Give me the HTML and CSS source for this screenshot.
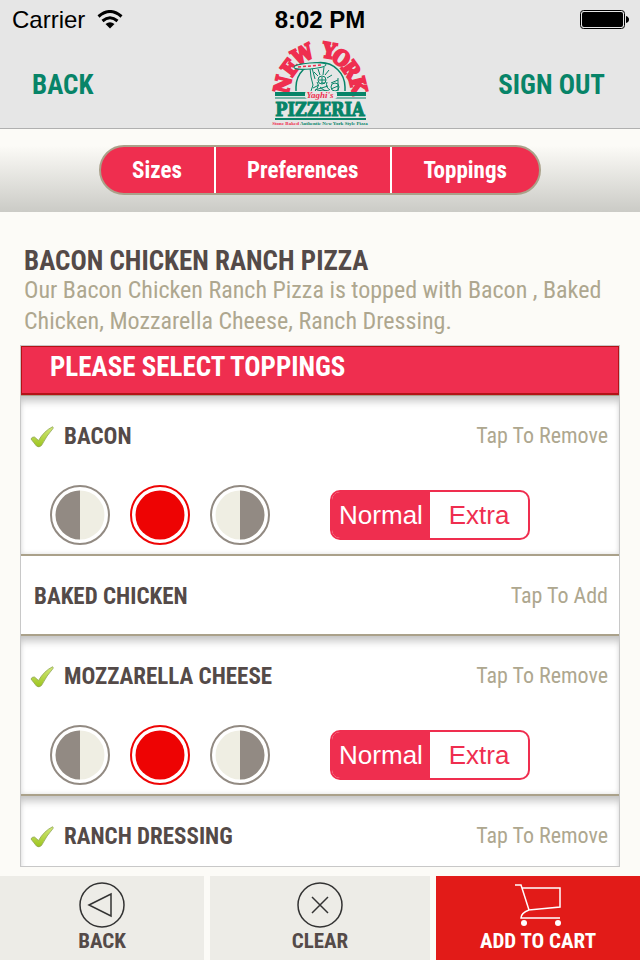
FILE: index.html
```html
<!DOCTYPE html>
<html lang="en">
<head>
    <meta charset="UTF-8">
    <meta name="viewport" content="width=device-width, initial-scale=1.0">
    <title>New York Pizzeria - Toppings</title>
    <link rel="stylesheet" href="styles.css">
</head>
<body>
    <!-- shared icons -->
    <svg class="sprite" aria-hidden="true">
        <defs>
            <linearGradient id="green" x1="0" y1="0" x2="0" y2="1">
                <stop offset="0" stop-color="#d3ea7a"/>
                <stop offset="1" stop-color="#9cc41c"/>
            </linearGradient>
        </defs>
        <symbol id="check" viewBox="0 0 24 22">
            <path d="M1 13 Q2 10.500 4.500 11 L8.500 14.500 Q14 5 22.500 0.800 Q23.500 0.800 23 2.500 Q17 9 11.500 19.500 Q9 22 6.500 20 Q4 17 1 13 Z" fill="url(#green)" stroke="#91a557" stroke-width="0.800"/>
        </symbol>
        <symbol id="left-half" viewBox="0 0 60 60">
            <circle cx="30" cy="30" r="29" fill="#fff" stroke="#928a82" stroke-width="2"/>
            <circle cx="30" cy="30" r="24.500" fill="#efeee3"/>
            <path d="M30 5.500 A24.500 24.500 0 0 0 30 54.500 Z" fill="#928a83"/>
        </symbol>
        <symbol id="whole" viewBox="0 0 60 60">
            <circle cx="30" cy="30" r="29" fill="#fff" stroke="#ee0505" stroke-width="2"/>
            <circle cx="30" cy="30" r="24.500" fill="#ee0303"/>
        </symbol>
        <symbol id="right-half" viewBox="0 0 60 60">
            <circle cx="30" cy="30" r="29" fill="#fff" stroke="#928a82" stroke-width="2"/>
            <circle cx="30" cy="30" r="24.500" fill="#efeee3"/>
            <path d="M30 5.500 A24.500 24.500 0 0 1 30 54.500 Z" fill="#928a83"/>
        </symbol>
    </svg>

    <header class="top">
        <div class="status-bar">
            <div class="carrier">
                <span>Carrier</span>
                <svg width="26" height="20" viewBox="0 0 26 20">
                    <path d="M1.500 6.500 Q13 -3.500 24.500 6.500" fill="none" stroke="#000" stroke-width="3"/>
                    <path d="M5.500 11 Q13 4.500 20.500 11" fill="none" stroke="#000" stroke-width="3"/>
                    <path d="M8.500 14 Q13 10.500 17.500 14 L13 18.500 Z"/>
                </svg>
            </div>
            <div class="time">8:02 PM</div>
            <div class="battery">
                <svg width="48" height="20" viewBox="0 0 48 20">
                    <rect x="0.500" y="0.500" width="44" height="18" rx="3" fill="none" stroke="#000"/>
                    <rect x="2" y="2" width="41" height="15" rx="2"/>
                    <path d="M46 6 Q49 7 49 9.500 Q49 12 46 13 Z"/>
                </svg>
            </div>
        </div>
        <nav class="nav-bar">
            <a href="#" class="nav-link">BACK</a>
            <svg class="logo" width="104" height="88" viewBox="-6 0 104 88" role="img" aria-label="New York Pizzeria">
                <path d="M23 51 V47 A24.500 24.500 0 0 1 72 47 V51" fill="none" stroke="#078468" stroke-width="1.500"/>
                <g fill="none" stroke="#078468">
                    <path d="M38 51 L40 45 L38 37 L37 28 L39 28 L42 39 M42 51 Q47 46 44 42 M44 51 Q50 49 56 51 M54 42 Q52 47 57 50 M58 43 L65 40 M58 49 L65 46 M65 38 V51"/>
                    <circle cx="49" cy="40" r="4"/>
                    <path d="M45 36 L41 32 M47 35 L45 29 M50 35 L51 27 M52 35 L56 30 M54 38 L59 35 M46 40 H53 M48 43 H52 M49 37 V43"/>
                    <circle cx="62" cy="47" r="4"/>
                    <path d="M40 48 L46 45 M42 50 L55 46 M47 47 L52 51"/>
                </g>
                <g class="logo-arc">
                    <text transform="translate(17 46) rotate(-77)">N</text>
                    <text transform="translate(23 32) rotate(-53)">E</text>
                    <text transform="translate(33 21) rotate(-27)">W</text>
                    <text transform="translate(55 18) rotate(10)">Y</text>
                    <text transform="translate(64 24) rotate(34)">O</text>
                    <text transform="translate(72 34) rotate(54)">R</text>
                    <text transform="translate(78 47) rotate(76)">K</text>
                </g>
                <ellipse cx="37" cy="26" rx="16" ry="3" fill="#e6e6e6" stroke="#078468" transform="rotate(-5 37 26)"/>
                <path d="M25 27 L49 25" stroke="#ef2e4f" stroke-width="1.500" stroke-dasharray="3 2"/>
                <path d="M2 54 H93" stroke="#078468" stroke-width="4"/>
                <path d="M2 58 H93" stroke="#078468"/>
                <rect x="32" y="51" width="32" height="8" rx="3" fill="#e6e6e6"/>
                <text class="logo-name" x="47" y="58">Yaghi's</text>
                <text class="logo-word" x="47" y="76">PIZZERIA</text>
                <path d="M2 79 H93" stroke="#078468" stroke-width="2"/>
                <text class="logo-tag" x="47" y="85"><tspan class="red">Stone Baked</tspan> Authentic New York Style Pizza</text>
            </svg>
            <a href="#" class="nav-link sign-out">SIGN OUT</a>
        </nav>
    </header>

    <div class="tabs-strip">
        <div class="tabs">
            <button>Sizes</button>
            <button>Preferences</button>
            <button>Toppings</button>
        </div>
    </div>

    <main>
        <div class="intro">
            <h1>BACON CHICKEN RANCH PIZZA</h1>
            <p>Our Bacon Chicken Ranch Pizza is topped with Bacon , Baked Chicken, Mozzarella Cheese, Ranch Dressing.</p>
        </div>

        <section class="panel">
            <h2>PLEASE SELECT TOPPINGS</h2>
            <ul class="toppings">
                <li class="topping selected">
                    <div class="topping-head">
                        <svg class="check"><use href="#check"/></svg>
                        <h3>BACON</h3>
                        <button class="tap">Tap To Remove</button>
                    </div>
                    <div class="options">
                        <div class="portions">
                            <label><input type="radio" name="bacon-side" aria-label="Left half"><svg><use href="#left-half"/></svg></label>
                            <label><input type="radio" name="bacon-side" aria-label="Whole" checked><svg><use href="#whole"/></svg></label>
                            <label><input type="radio" name="bacon-side" aria-label="Right half"><svg><use href="#right-half"/></svg></label>
                        </div>
                        <div class="amount">
                            <label><input type="radio" name="bacon-amount" checked><span>Normal</span></label>
                            <label><input type="radio" name="bacon-amount"><span>Extra</span></label>
                        </div>
                    </div>
                </li>
                <li class="topping">
                    <div class="topping-head">
                        <h3>BAKED CHICKEN</h3>
                        <button class="tap">Tap To Add</button>
                    </div>
                </li>
                <li class="topping selected">
                    <div class="topping-head">
                        <svg class="check"><use href="#check"/></svg>
                        <h3>MOZZARELLA CHEESE</h3>
                        <button class="tap">Tap To Remove</button>
                    </div>
                    <div class="options">
                        <div class="portions">
                            <label><input type="radio" name="mozz-side" aria-label="Left half"><svg><use href="#left-half"/></svg></label>
                            <label><input type="radio" name="mozz-side" aria-label="Whole" checked><svg><use href="#whole"/></svg></label>
                            <label><input type="radio" name="mozz-side" aria-label="Right half"><svg><use href="#right-half"/></svg></label>
                        </div>
                        <div class="amount">
                            <label><input type="radio" name="mozz-amount" checked><span>Normal</span></label>
                            <label><input type="radio" name="mozz-amount"><span>Extra</span></label>
                        </div>
                    </div>
                </li>
                <li class="topping selected">
                    <div class="topping-head">
                        <svg class="check"><use href="#check"/></svg>
                        <h3>RANCH DRESSING</h3>
                        <button class="tap">Tap To Remove</button>
                    </div>
                </li>
            </ul>
        </section>
    </main>

    <footer class="actions">
        <button>
            <svg width="46" height="46" viewBox="0 0 46 46" fill="none" stroke="#333" stroke-width="1.500">
                <circle cx="23" cy="23" r="22"/>
                <path d="M10 23 L32 12 V34 Z"/>
            </svg>
            BACK
        </button>
        <button>
            <svg width="46" height="46" viewBox="0 0 46 46" fill="none" stroke="#333" stroke-width="1.500">
                <circle cx="23" cy="23" r="22"/>
                <path d="M15 15 L31 31 M31 15 L15 31"/>
            </svg>
            CLEAR
        </button>
        <button class="add">
            <svg width="46" height="46" viewBox="0 0 46 46" fill="none" stroke="#fff" stroke-width="1.500">
                <path d="M0 3 H6 L14 28 L45 25 V6 H7 M14 28 Q6 31 6 36 H45"/>
                <circle cx="9" cy="41" r="3" fill="#fff" stroke="none"/>
                <circle cx="43" cy="41" r="3" fill="#fff" stroke="none"/>
            </svg>
            ADD TO CART
        </button>
    </footer>
</body>
</html>
```
FILE: styles.css
```css
* {
    box-sizing: border-box;
}
body {
    margin: 0;
    height: 100vh;
    display: flex;
    flex-direction: column;
    font-family: 'Roboto Condensed', 'Roboto', sans-serif;
    background-color: #fcfbf7;
    color: #544a48;
}
h1, h2, h3, p, ul {
    margin: 0;
    padding: 0;
}
button {
    font-family: inherit;
    border: none;
    background: none;
    padding: 0;
    cursor: pointer;
}
.sprite {
    position: absolute;
    width: 0;
    height: 0;
}

/* header */
.top {
    background-color: #e6e6e6;
    border-bottom: 1px solid #b0b0b0;
}
.status-bar {
    display: grid;
    grid-template-columns: 1fr auto 1fr;
    align-items: center;
    height: 40px;
    padding: 0 12px;
    font-family: 'Liberation Sans', sans-serif;
    font-size: 24px;
    color: #000;
}
.carrier {
    display: flex;
    align-items: center;
    gap: 12px;
}
.time {
    font-weight: bold;
}
.battery {
    display: flex;
    justify-content: flex-end;
}
.battery svg {
    overflow: visible;
}
.nav-bar {
    display: grid;
    grid-template-columns: 1fr auto 1fr;
    height: 88px;
    padding: 0 35px 0 32px;
}
.nav-link {
    align-self: center;
    padding-top: 2px;
    font-size: 27px;
    font-weight: bold;
    color: #078468;
    text-decoration: none;
}
.sign-out {
    text-align: right;
}
.logo {
    overflow: visible;
}
.logo text {
    font-family: 'DejaVu Serif Condensed', 'Liberation Serif', serif;
    font-weight: bold;
    text-anchor: middle;
}
.logo .logo-arc text {
    font-size: 21px;
    fill: #ef2e4f;
    stroke: #ef2e4f;
    stroke-width: 2px;
}
.logo .logo-name {
    font-family: 'Liberation Serif', serif;
    font-size: 9px;
    font-style: italic;
    fill: #ef2e4f;
}
.logo .logo-word {
    font-size: 18px;
    fill: #078468;
    stroke: #078468;
    stroke-width: 1px;
}
.logo .logo-tag {
    font-family: 'Liberation Serif', serif;
    font-size: 5px;
    fill: #078468;
}
.logo .red {
    fill: #ef2e4f;
}

/* tabs */
.tabs-strip {
    display: flex;
    justify-content: center;
    padding: 16px 0 17px;
    background: linear-gradient(#fcfbf7 20%, #cbcbc6);
}
.tabs {
    display: flex;
    height: 50px;
    border: 2px solid #aaa18a;
    border-radius: 25px;
    background-color: #ef2e4f;
    overflow: hidden;
}
.tabs button {
    padding: 0 32px 0 31px;
    font-size: 23px;
    font-weight: bold;
    color: #fff;
}
.tabs button + button {
    border-left: 2px solid #fff;
}

/* content */
main {
    flex: 1;
    min-height: 0;
    display: flex;
    flex-direction: column;
    padding: 36px 20px 9px;
}
.intro {
    padding: 0 4px 8px;
}
.intro h1 {
    font-size: 27px;
    line-height: 27px;
}
.intro p {
    font-size: 24px;
    line-height: 31px;
    color: #aea78f;
}
.panel {
    flex: 1;
    min-height: 0;
    display: flex;
    flex-direction: column;
    border: 1px solid #c8c8c8;
    background-color: #fff;
}
.panel h2 {
    flex: none;
    height: 49px;
    padding-left: 28px;
    border: 1px solid #b31217;
    border-bottom-width: 2px;
    background-color: #ef2e4f;
    color: #fff;
    font-size: 27px;
    line-height: 40px;
}
.toppings {
    flex: 1;
    min-height: 0;
    overflow-y: auto;
    scrollbar-width: none;
    list-style: none;
    border-top: 1px solid #aaa18a;
}
.topping {
    height: 80px;
    border-bottom: 2px solid #aaa18a;
}
.topping.selected {
    height: 160px;
    box-shadow: inset 0 10px 8px -5px #c4c4c4, inset 0 0 5px #ddd;
}
.topping-head {
    display: flex;
    align-items: center;
    height: 80px;
    padding: 0 11px 0 13px;
}
.selected .topping-head {
    padding-left: 9px;
}
.check {
    width: 24px;
    height: 22px;
    margin: 2px 10px 0 0;
}
.topping h3 {
    flex: 1;
    font-size: 23px;
}
.tap {
    padding-bottom: 2px;
    font-size: 22px;
    color: #aea78f;
}
.options {
    display: flex;
    align-items: center;
    gap: 60px;
    padding: 9px 29px;
}
.options input {
    position: absolute;
    opacity: 0;
}
.portions {
    display: flex;
    gap: 20px;
}
.portions svg {
    display: block;
    width: 60px;
    height: 60px;
}
.amount {
    display: flex;
    width: 200px;
    height: 50px;
    border: 2px solid #ef2e4f;
    border-radius: 10px;
    overflow: hidden;
    font-family: 'Liberation Sans', sans-serif;
    font-size: 26px;
    line-height: 46px;
    color: #ef2e4f;
}
.amount label {
    flex: 1;
    text-align: center;
}
.amount span {
    display: block;
}
.amount input:checked + span {
    background-color: #ef2e4f;
    color: #fff;
}

/* bottom buttons */
.actions {
    display: grid;
    grid-template-columns: 1fr 220px 1fr;
    gap: 6px;
    height: 84px;
}
.actions button {
    display: flex;
    flex-direction: column;
    align-items: center;
    padding-top: 6px;
    background-color: #edece7;
    color: #544a48;
    font-size: 21px;
    font-weight: bold;
    line-height: 26px;
}
.actions .add {
    background-color: #e21b18;
    color: #fff;
}
```
